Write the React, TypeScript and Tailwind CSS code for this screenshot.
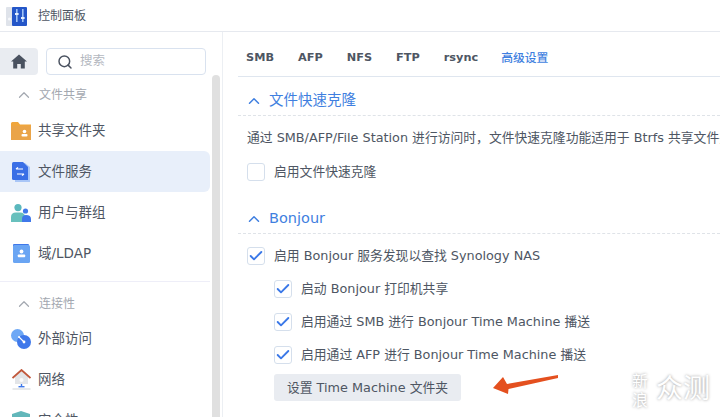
import React from 'react';
import { ChevronUp, Check, Search } from 'lucide-react';

const FONT = 'font-["DejaVu_Sans","Noto_Sans_CJK_SC",sans-serif]';

const PanelIcon = () => (
  <svg width="24" height="24" viewBox="0 0 24 24">
    <rect x="1" y="3" width="10" height="19" rx="1" fill="#dfe3ea" />
    <circle cx="4.5" cy="15" r="1.6" fill="#f5f7fa" />
    <rect x="7" y="3" width="15" height="19" rx="1" fill="#2456c8" />
    <rect x="11" y="5" width="1.6" height="13" fill="#9fc2f5" />
    <rect x="17" y="5" width="1.6" height="13" fill="#9fc2f5" />
    <rect x="10" y="9" width="3.6" height="2" fill="#e6effc" />
    <rect x="16" y="13" width="3.6" height="2" fill="#e6effc" />
  </svg>
);

const HomeIcon = () => (
  <svg width="16" height="15" viewBox="0 0 16 15" fill="#4a5260">
    <path d="M8 0.5 L16 7.5 H13.8 V14.5 H9.8 V10 H6.2 V14.5 H2.2 V7.5 H0 Z" />
  </svg>
);

const FolderIcon = () => (
  <svg width="20" height="18" viewBox="0 0 20 18">
    <path d="M0 1.5 Q0 0 1.5 0 H7 L9 2.5 H20 V18 H0 Z" fill="#f0a63c" />
    <rect x="0" y="4" width="20" height="14" fill="#eaa448" />
    <circle cx="13.5" cy="9.5" r="1.8" fill="#fff" />
    <rect x="10.5" y="12" width="6" height="2.4" rx="1" fill="#fff" />
  </svg>
);

const FileServiceIcon = () => (
  <svg width="18" height="20" viewBox="0 0 18 20">
    <path d="M3 1 H13 L18 5 V20 H3 Z" fill="#a9c6f7" />
    <path d="M0 1.5 Q0 0 1.5 0 H11 L16 5 V18 H1.5 Q0 18 0 16.5 Z" fill="#3a6fe6" />
    <path d="M4 7 H11 M4 7 L6 5.4 M12 12 H5 M12 12 L10 13.6" stroke="#fff" strokeWidth="1.2" fill="none" />
  </svg>
);

const UsersIcon = () => (
  <svg width="20" height="18" viewBox="0 0 20 18">
    <circle cx="7" cy="3.6" r="3.6" fill="#5bb8bd" />
    <path d="M0 18 V13 Q0 8.5 5 8.5 H9 Q14 8.5 14 13 V18 Z" fill="#68c0bd" />
    <circle cx="14.5" cy="7" r="2.6" fill="#3f78ea" />
    <path d="M11 18 V15 Q11 11 15 11 Q20 11 20 15 V18 Z" fill="#3f78ea" />
  </svg>
);

const LdapIcon = () => (
  <svg width="17" height="19" viewBox="0 0 17 19">
    <rect x="0" y="0" width="16" height="3" rx="1" fill="#3f78ea" />
    <rect x="0" y="1" width="17" height="18" rx="1.5" fill="#6aa5f3" />
    <circle cx="8.5" cy="7.5" r="1.9" fill="#fff" />
    <rect x="4.8" y="10.5" width="7.4" height="2.8" rx="0.8" fill="#fff" />
  </svg>
);

const ExternalIcon = () => (
  <svg width="20" height="20" viewBox="0 0 20 20">
    <circle cx="6.5" cy="6.5" r="6.5" fill="#6ea8f5" />
    <circle cx="13" cy="13" r="7" fill="#3f78ea" />
    <path d="M8 8 L13 13" stroke="#fff" strokeWidth="1.1" />
    <circle cx="8" cy="8" r="1" fill="#fff" />
    <circle cx="13" cy="13" r="1.4" fill="#fff" />
  </svg>
);

const NetworkIcon = () => (
  <svg width="19" height="21" viewBox="0 0 19 21">
    <path d="M3 8 L9.5 2 L16 8 V15 H3 Z" fill="#e3e5e8" />
    <path d="M0.5 9 L9.5 1 L18.5 9" stroke="#c0583c" strokeWidth="1.8" fill="none" />
    <rect x="7.5" y="9" width="4" height="4" rx="2" fill="#fbfbfb" />
    <rect x="8.8" y="15" width="1.4" height="3" fill="#3f78ea" />
    <rect x="6.5" y="17" width="6" height="1.4" fill="#3f78ea" />
    <rect x="0.5" y="19.5" width="18" height="1" fill="#cfd3d8" />
  </svg>
);

const ShieldIcon = () => (
  <svg width="18" height="20" viewBox="0 0 18 20">
    <path d="M9 0 L18 3 V20 H0 V3 Z" fill="#62b7ba" />
  </svg>
);

const SectionLabel = ({ label, className }: { label: string; className: string }) => (
  <div className={`flex items-center pl-[15px] text-[12px] text-[#a3a8b0] ${className}`}>
    <ChevronUp size={18} strokeWidth={1.6} className="text-[#a3a8b0] mr-[6px] shrink-0" />
    {label}
  </div>
);

const SideItem = ({ icon, label, active }: { icon: React.ReactNode; label: string; active?: boolean }) => (
  <div className={`h-[41px] flex items-center rounded-r-[6px] text-[13.5px] text-[#4e5663] ${active ? 'bg-[#e8effa]' : ''}`}>
    <div className="w-[38px] flex justify-center pl-[4px] shrink-0">{icon}</div>
    {label}
  </div>
);

const CheckRow = ({ label, checked, indent }: { label: string; checked?: boolean; indent?: boolean }) => (
  <div className={`h-[33px] flex items-center gap-[9px] text-[12.8px] text-[#4e5663] whitespace-nowrap ${indent ? 'pl-[36px]' : 'pl-[9px]'}`}>
    <div className="w-[18px] h-[18px] rounded-[3px] border border-[#d5dfec] bg-white flex items-center justify-center shrink-0">
      {checked && <Check size={16} strokeWidth={2.8} className="text-[#3a78e8]" />}
    </div>
    {label}
  </div>
);

const SectionTitle = ({ label }: { label: string }) => (
  <div className="h-[31px] pt-[2px] flex items-center border-b border-dashed border-[#dfe3e8] text-[14.5px] text-[#3f7fe0] pl-[8px]">
    <ChevronUp size={18} strokeWidth={2} className="mr-[6px] -ml-[1px] shrink-0" />
    {label}
  </div>
);

export default function App() {
  return (
    <div className={`w-[720px] h-[417px] overflow-hidden bg-white relative ${FONT}`}>
      {/* title bar */}
      <div className="h-[32px] flex items-center border-b border-[#e6e9ef] pl-[5px] gap-[9px] text-[12px] text-[#4e5663]">
        <PanelIcon />
        控制面板
      </div>

      <div className="flex h-[385px]">
        {/* sidebar */}
        <div className="w-[223px] shrink-0 border-r border-[#eceff3] relative overflow-hidden">
          <div className="w-[210px] pt-[16px]">
            <div className="flex h-[27px] gap-[8px]">
              <div className="w-[38px] bg-[#e9ecf1] rounded-r-[4px] flex items-center justify-center">
                <HomeIcon />
              </div>
              <div className="w-[160px] border border-[#d9e2ef] rounded-[4px] flex items-center pl-[10px] gap-[7px] text-[12.5px] text-[#b4b8bf]">
                <Search size={16} strokeWidth={2.2} className="text-[#4a5260]" />
                搜索
              </div>
            </div>
            <SectionLabel label="文件共享" className="mt-[4px] h-[31px] pt-[1px]" />
            <SideItem icon={<FolderIcon />} label="共享文件夹" />
            <SideItem icon={<FileServiceIcon />} label="文件服务" active />
            <SideItem icon={<UsersIcon />} label="用户与群组" />
            <SideItem icon={<LdapIcon />} label="域/LDAP" />
            <div className="mt-[7px] border-b border-[#eeeef8]" />
            <SectionLabel label="连接性" className="h-[36px] pt-[7px]" />
            <SideItem icon={<ExternalIcon />} label="外部访问" />
            <SideItem icon={<NetworkIcon />} label="网络" />
            <SideItem icon={<ShieldIcon />} label="安全性" />
          </div>
          {/* scrollbar */}
          <div className="absolute left-[212px] top-[43px] bottom-0 w-[8px] bg-[#e0e0e0] rounded-t-[4px]" />
        </div>

        {/* content */}
        <div className="flex-1 min-w-0 pl-[15px] overflow-hidden">
          <div className="h-[45px] flex items-center gap-[24px] border-b border-[#dfe6ef] pl-[8px] pt-[9px] text-[11.3px] font-bold text-[#4e5663]">
            <span>SMB</span>
            <span>AFP</span>
            <span>NFS</span>
            <span>FTP</span>
            <span>rsync</span>
            <span className="text-[11.8px] font-medium text-[#3f7fe0] -ml-[1px]">高级设置</span>
          </div>

          <div className="mt-[8px]">
            <SectionTitle label="文件快速克隆" />
          </div>
          <div className="h-[44px] flex items-center pl-[9px] text-[12.8px] text-[#4e5663] whitespace-nowrap">
            通过 SMB/AFP/File Station 进行访问时，文件快速克隆功能适用于 Btrfs 共享文件夹
          </div>
          <div className="-mt-[5px]">
            <CheckRow label="启用文件快速克隆" />
          </div>

          <div className="mt-[15px]">
            <SectionTitle label="Bonjour" />
          </div>
          <div className="mt-[5px]">
            <CheckRow label="启用 Bonjour 服务发现以查找 Synology NAS" checked />
            <CheckRow label="启动 Bonjour 打印机共享" checked indent />
            <CheckRow label="启用通过 SMB 进行 Bonjour Time Machine 播送" checked indent />
            <CheckRow label="启用通过 AFP 进行 Bonjour Time Machine 播送" checked indent />
          </div>
          <div className="mt-[3px] ml-[36px] w-[187px] h-[27px] bg-[#e9ecf1] rounded-[3px] flex items-center justify-center text-[12.8px] text-[#4e5663] whitespace-nowrap">
            设置 Time Machine 文件夹
          </div>
        </div>
      </div>

      {/* red annotation arrow */}
      <svg className="absolute left-[490px] top-[370px]" width="72" height="30" viewBox="0 0 72 30">
        <path d="M68 5 L17 14 L13 7 L3 18 L18 24 L18.5 19 L68 8 Z" fill="#e4501f" />
      </svg>

      {/* watermark */}
      <div className="absolute left-[632px] top-[371px] flex items-start gap-[8px] text-white [text-shadow:0_0_3px_rgba(0,0,0,0.4)] font-['Noto_Sans_CJK_SC',sans-serif]">
        <div className="text-[16px] leading-[19px] w-[16px]">新浪</div>
        <div className="text-[27px] leading-[32px] whitespace-nowrap">众测</div>
      </div>
    </div>
  );
}
